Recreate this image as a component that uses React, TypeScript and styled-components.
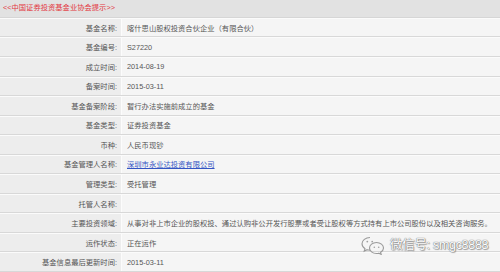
import styled, { createGlobalStyle } from "styled-components";

const GlobalStyle = createGlobalStyle`
  html, body {
    margin: 0;
    padding: 0;
    background: #f4f4f4;
  }
  body {
    width: 500px;
    height: 272px;
    overflow: hidden;
    font-family: "Liberation Sans", "Noto Sans CJK SC", sans-serif;
  }
`;

type Row = { label: string; value: string; link?: boolean };

const rows: Row[] = [
  { label: "基金名称:", value: "喀什思山股权投资合伙企业（有限合伙）" },
  { label: "基金编号:", value: "S27220" },
  { label: "成立时间:", value: "2014-08-19" },
  { label: "备案时间:", value: "2015-03-11" },
  { label: "基金备案阶段:", value: "暂行办法实施前成立的基金" },
  { label: "基金类型:", value: "证券投资基金" },
  { label: "币种:", value: "人民币现钞" },
  { label: "基金管理人名称:", value: "深圳市永业达投资有限公司", link: true },
  { label: "管理类型:", value: "受托管理" },
  { label: "托管人名称:", value: "" },
  {
    label: "主要投资领域:",
    value:
      "从事对非上市企业的股权投、通过认购非公开发行股票或者受让股权等方式持有上市公司股份以及相关咨询服务。",
  },
  { label: "运作状态:", value: "正在运作" },
  { label: "基金信息最后更新时间:", value: "2015-03-11" },
];

export default function App() {
  return (
    <>
      <GlobalStyle />
      <Page>
        <Notice>&lt;&lt;中国证券投资基金业协会提示&gt;&gt;</Notice>
        <Table>
          {rows.map(r => (
            <TableRow key={r.label}>
              <Label>{r.label}</Label>
              <Value $link={r.link}>{r.value}</Value>
            </TableRow>
          ))}
        </Table>
        <Watermark>
          <svg width="26" height="20" viewBox="0 0 26 20">
            <g fill="none" stroke="#9a9a9a" strokeWidth="1.1">
              <path d="M10 2.5c-4.4 0-8 2.8-8 6.3 0 2 1.2 3.7 3 4.9l-.8 2.5 2.9-1.5c.9.3 1.9.4 2.9.4" />
              <path d="M16.5 7.5c-3.9 0-7 2.5-7 5.5s3.1 5.5 7 5.5c.8 0 1.6-.1 2.3-.3l2.4 1.2-.6-2.1c1.7-1 2.9-2.6 2.9-4.3 0-3-3.1-5.5-7-5.5z" />
            </g>
            <g fill="#a0a0a0">
              <circle cx="7.3" cy="6.6" r="0.9" />
              <circle cx="12.2" cy="6.6" r="0.9" />
              <circle cx="14.3" cy="12.2" r="0.8" />
              <circle cx="18.7" cy="12.2" r="0.8" />
            </g>
          </svg>
          <WatermarkText>微信号: smgc8888</WatermarkText>
        </Watermark>
      </Page>
    </>
  );
}

const Page = styled.div`
  position: relative;
  width: 500px;
  height: 272px;
  display: flex;
  flex-direction: column;
`;

const Notice = styled.div`
  height: 18px;
  box-sizing: border-box;
  padding: 3px 0 0 3px;
  background: #e2e2e2;
  color: #e2383f;
  font-size: 7.3px;
  line-height: 9px;
  border-bottom: 1px solid #d6d6d6;
`;

const Table = styled.div`
  display: flex;
  flex-direction: column;
`;

const TableRow = styled.div`
  display: grid;
  grid-template-columns: 122px 1fr;
  height: 19.55px;
  box-sizing: border-box;
  border-bottom: 1px solid #d8d8d8;
  border-top: 1px solid #fbfbfb;
  font-size: 7.3px;
  color: #555;
`;

const Label = styled.div`
  display: flex;
  align-items: center;
  justify-content: flex-end;
  padding-right: 4px;
  background: #ededed;
  border-right: 1px solid #fcfcfc;
  white-space: nowrap;
`;

const Value = styled.div<{ $link?: boolean }>`
  display: flex;
  align-items: center;
  padding-left: 5px;
  background: #f5f5f5;
  white-space: nowrap;
  color: ${p => (p.$link ? "#3455c4" : "#555")};
  text-decoration: ${p => (p.$link ? "underline" : "none")};
`;

const Watermark = styled.div`
  position: absolute;
  left: 360px;
  top: 235px;
  display: flex;
  align-items: center;
  gap: 4px;
  white-space: nowrap;
`;

const WatermarkText = styled.span`
  font-family: "Liberation Sans", "Noto Sans CJK SC", sans-serif;
  font-size: 12.5px;
  line-height: 20px;
  color: #ffffff;
  letter-spacing: -0.3px;
  white-space: nowrap;
  text-shadow: 0 0 1px #777, 0 0 1px #777, 1px 1px 1px rgba(0, 0, 0, 0.35);
`;
